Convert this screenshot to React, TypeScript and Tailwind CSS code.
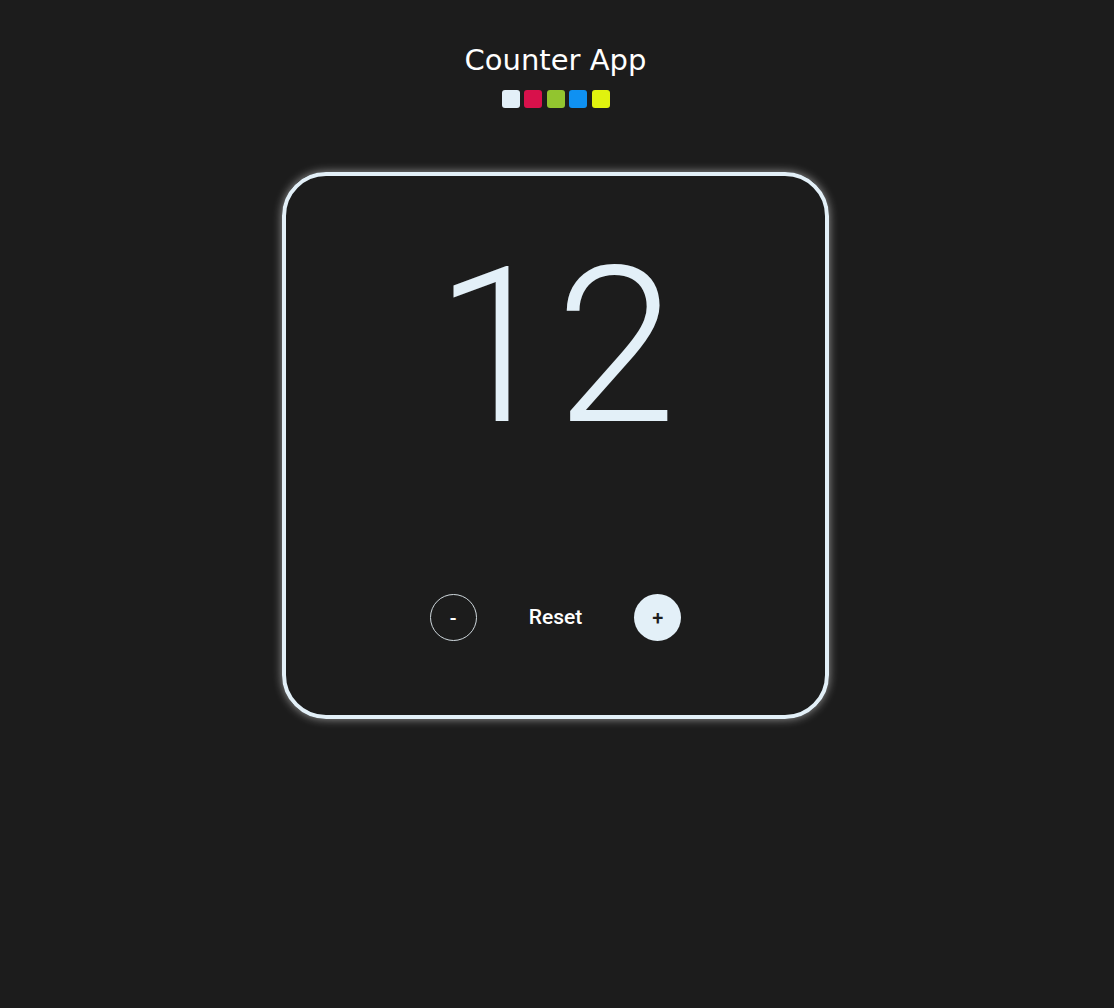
export default function App() {
  const swatches = ["bg-[#e3f0f8]", "bg-[#d8114b]", "bg-[#92c52f]", "bg-[#0f91f2]", "bg-[#e0f20f]"];
  return (
    <div className="min-h-screen w-full bg-[#1c1c1c] pr-[3px] flex flex-col items-center">
      <h1 className="mt-[42px] text-[29px] leading-[36px] text-white font-['DejaVu_Sans',sans-serif]">
        Counter App
      </h1>
      <div className="mt-3 flex gap-[4.5px]">
        {swatches.map((c) => (
          <div key={c} className={`h-[18px] w-[18px] rounded-[3px] ${c}`} />
        ))}
      </div>
      <div className="mt-[64px] flex h-[547px] w-[547px] flex-col items-center rounded-[44px] border-4 border-[#e3f0f8] pt-[62px] shadow-[0_0_10px_rgba(255,255,255,0.55)] font-['Roboto',sans-serif]">
        <div className="h-[218px] text-[218px] font-light leading-none text-[#e3f0f8]">12</div>
        <div className="mt-[138px] flex items-center gap-[52px]">
          <button className="flex h-[47px] w-[47px] items-center justify-center rounded-full border border-[#cfd8dd] text-[20px] font-medium text-white">
            -
          </button>
          <button className="text-[21px] font-medium text-white">Reset</button>
          <button className="flex h-[47px] w-[47px] items-center justify-center rounded-full bg-[#e3f0f8] text-[20px] font-medium text-[#1c1c1c]">
            +
          </button>
        </div>
      </div>
    </div>
  );
}
